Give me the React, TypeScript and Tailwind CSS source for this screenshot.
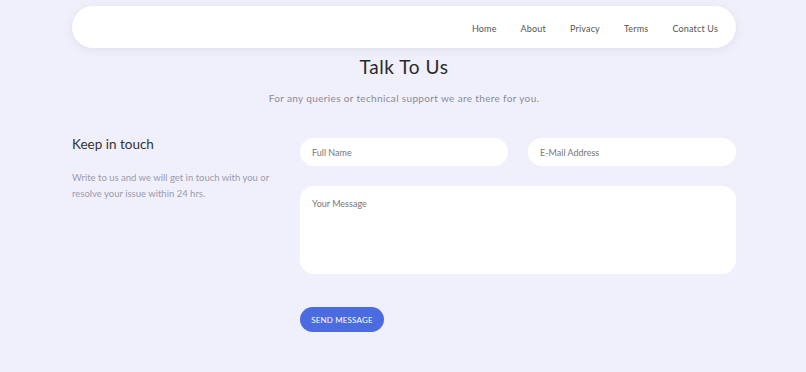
import React from 'react';

const navLinks = ['Home', 'About', 'Privacy', 'Terms', 'Conatct Us'];

const App: React.FC = () => {
  return (
    <div className="min-h-[372px] bg-[#f0f0fc] font-['Lato',sans-serif]">
      <div className="ml-[72px] w-[664px] pt-[6px]">
        {/* header */}
        <header className="flex h-[42px] items-center justify-end rounded-full bg-white pr-[18px] shadow-[0_2px_8px_rgba(120,120,170,0.15)]">
          <nav className="flex items-center gap-[24px] pt-[4px] text-[9px] tracking-[0.02em] text-[#555]">
            {navLinks.map(link => (
              <a key={link} href="#" className="hover:text-black">{link}</a>
            ))}
          </nav>
        </header>

        <h1 className="mt-[5px] text-center text-[19px] leading-[28px] tracking-[0.03em] text-[#2a2a2a]">Talk To Us</h1>
        <p className="mt-[9px] text-center text-[10px] leading-[16px] tracking-[0.035em] text-[#8a8a96]">
          For any queries or technical support we are there for you.
        </p>

        <div className="mt-[28px] flex">
          <div className="w-[228px]">
            <h3 className="text-[13.5px] leading-[20px] text-[#333]">Keep in touch</h3>
            <p className="mt-[16px] text-[9.5px] leading-[16px] text-[#9a9aaa]">
              Write to us and we will get in touch with you or resolve your issue within 24 hrs.
            </p>
          </div>

          <form className="mt-[4px] flex-1" onSubmit={e => e.preventDefault()}>
            <div className="flex gap-[20px]">
              <input
                className="h-[28px] flex-1 rounded-full bg-white px-[12px] text-[9px] text-[#555] placeholder:text-[#777] outline-none"
                placeholder="Full Name"
              />
              <input
                className="h-[28px] flex-1 rounded-full bg-white px-[12px] text-[9px] text-[#555] placeholder:text-[#777] outline-none"
                placeholder="E-Mail Address"
              />
            </div>
            <textarea
              className="mt-[20px] block h-[88px] w-full resize-none rounded-[14px] bg-white px-[12px] py-[11px] text-[9px] text-[#555] placeholder:text-[#777] outline-none"
              placeholder="Your Message"
            />
            <button
              type="submit"
              className="mt-[33px] h-[25px] w-[84px] rounded-full bg-[#4b6ce0] text-[8px] tracking-[0.02em] text-white"
            >
              SEND MESSAGE
            </button>
          </form>
        </div>
      </div>
    </div>
  );
};

export default App;
